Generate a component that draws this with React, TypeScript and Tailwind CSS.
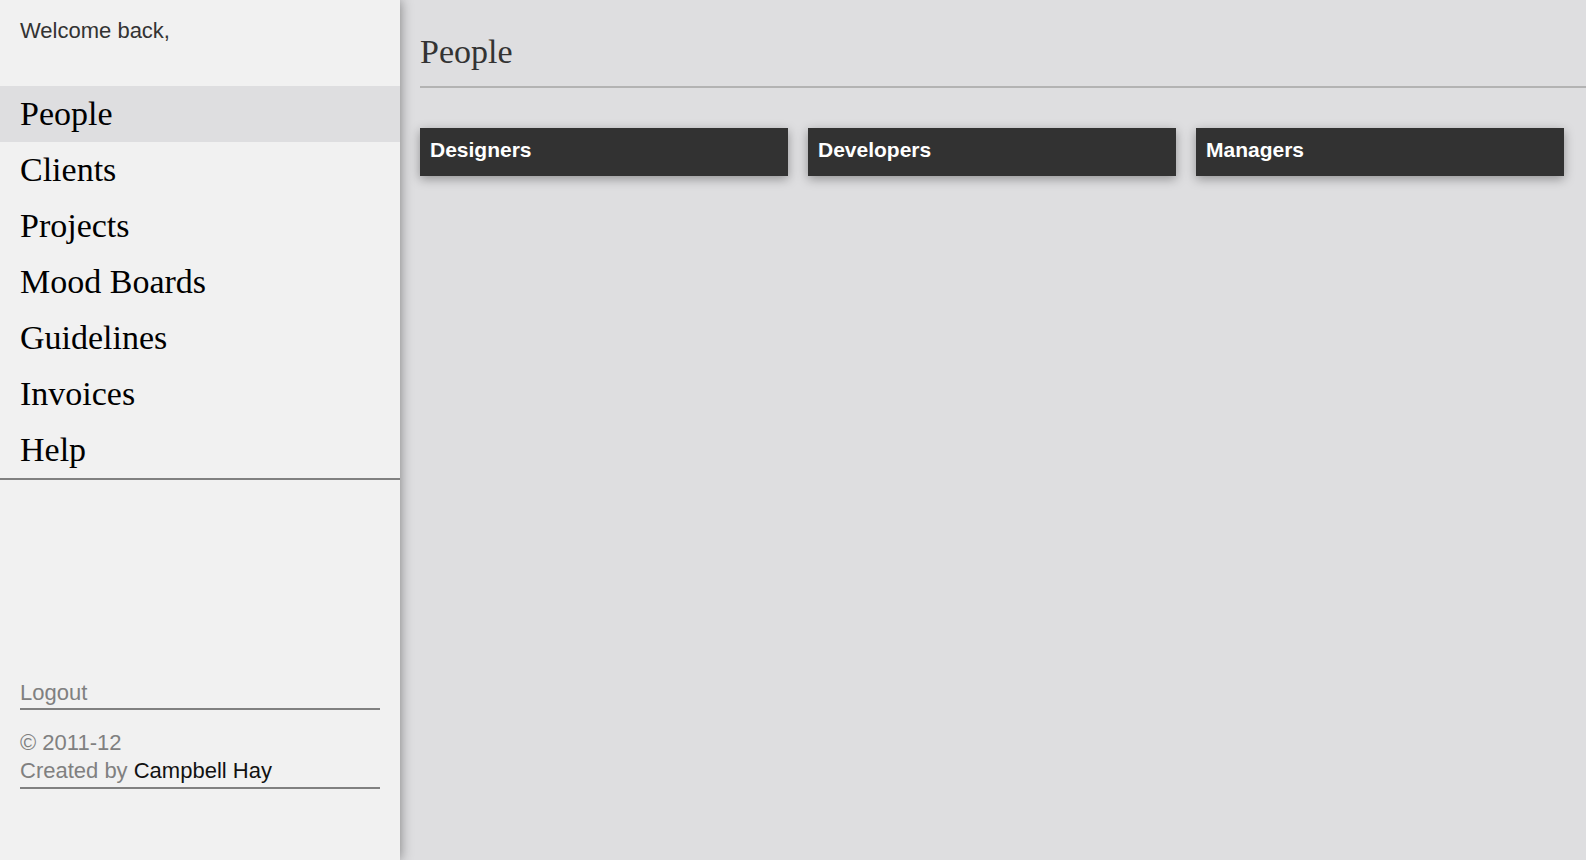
import React from 'react';

const navItems = ['People', 'Clients', 'Projects', 'Mood Boards', 'Guidelines', 'Invoices', 'Help'];
const groups = ['Designers', 'Developers', 'Managers'];

const sans = "font-['Liberation_Sans',Arial,sans-serif]";
const serif = "font-['Liberation_Serif','Times_New_Roman',serif]";

const Sidebar: React.FC<{ active: string }> = ({ active }) => (
  <aside className="relative z-10 flex h-full w-[400px] shrink-0 flex-col bg-[#f1f1f1] shadow-[0_0_12px_rgba(0,0,0,0.45)]">
    <div className={`h-[86px] px-5 pt-[17px] text-[22px] leading-[28px] text-[#333] ${sans}`}>Welcome back,</div>

    <nav className="border-b-2 border-[#808080]">
      {navItems.map((item) => (
        <a
          key={item}
          href="#"
          className={`block h-14 px-5 text-[34px] leading-[56px] text-black ${serif} ${
            item === active ? 'bg-[#dedee0]' : ''
          }`}
        >
          {item}
        </a>
      ))}
    </nav>

    <div className={`mt-auto px-5 pb-[71px] text-[22px] leading-[28px] text-[#808080] ${sans}`}>
      <a href="#" className="block border-b-2 border-[#808080] pt-[1px] pb-[1px]">
        Logout
      </a>
      <div className="mt-[19px] border-b-2 border-[#808080] pb-[2px]">
        <div>© 2011-12</div>
        <div>
          Created by <span className="text-[#111]">Campbell Hay</span>
        </div>
      </div>
    </div>
  </aside>
);

export default function App() {
  return (
    <div className="flex h-[860px] w-full overflow-hidden bg-[#dedee0]">
      <Sidebar active="People" />

      <main className="flex-1 pl-5">
        <h1 className={`box-content h-[54px] border-b-2 border-[#b3b3b3] pt-8 text-[34px] leading-[40px] font-normal text-[#333] ${serif}`}>
          People
        </h1>

        <div className="mt-10 grid grid-cols-3 gap-5 pr-[22px]">
          {groups.map((g) => (
            <div
              key={g}
              className={`h-12 bg-[#323232] px-[10px] pt-[10px] text-[21px] font-bold leading-[24px] text-white shadow-[0_3px_10px_rgba(0,0,0,0.35)] ${sans}`}
            >
              {g}
            </div>
          ))}
        </div>
      </main>
    </div>
  );
}
